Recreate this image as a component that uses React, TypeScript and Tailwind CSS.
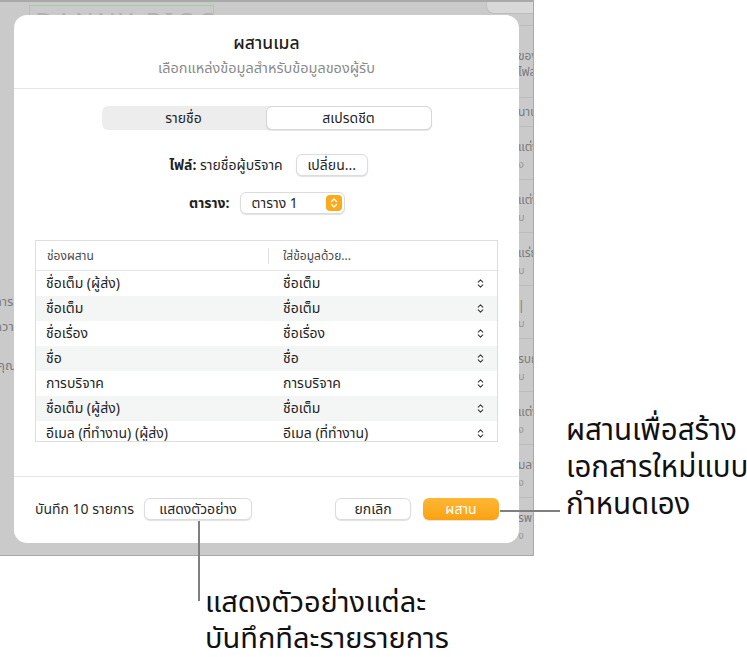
import { ChevronsUpDown } from "lucide-react";

const font = { fontFamily: '"Noto Sans Thai", "Noto Sans", "DejaVu Sans", sans-serif' };

const rows = [
  ["ชื่อเต็ม (ผู้ส่ง)", "ชื่อเต็ม"],
  ["ชื่อเต็ม", "ชื่อเต็ม"],
  ["ชื่อเรื่อง", "ชื่อเรื่อง"],
  ["ชื่อ", "ชื่อ"],
  ["การบริจาค", "การบริจาค"],
  ["ชื่อเต็ม (ผู้ส่ง)", "ชื่อเต็ม"],
  ["อีเมล (ที่ทำงาน) (ผู้ส่ง)", "อีเมล (ที่ทำงาน)"],
];

const sideRows = [
  ["แต่งงาน", "ง"],
  ["แต่งงาน", "บ"],
  ["แร่ธาตุ", "บ"],
  ["| ", "บ"],
  ["รบกวน", "บ"],
  ["แต่งงาน", "ง"],
  ["มลพิษ", "ง"],
  ["รพ", "ง"],
];

function Background() {
  return (
    <div className="relative w-[534px] h-[556px] bg-[#cacaca] border-t-2 border-r border-b border-[#a9a9a9] overflow-hidden">
      <div className="absolute left-[29px] top-[3px] w-[185px] h-[30px] border border-[#a6cda6] overflow-hidden">
        <div className="whitespace-nowrap text-[25px] leading-none tracking-[3px] text-[#b2b2b2] pl-[5px] pt-[5px]" style={font}>
          DANNY BIGG
        </div>
      </div>
      <div className="absolute left-[486px] top-0 w-[60px] h-[12px] rounded-bl-[8px] bg-[#d8d8d8] border-l border-b border-[#bdbdbd]" />
      <div className="absolute left-[495px] top-[23px] w-[60px] flex flex-col text-[#7b7b7b] text-[12px] leading-[16px] whitespace-nowrap" style={font}>
        <div className="h-[72px] border-t border-[#bcbcbc] pt-[22px] pl-[23px]">
          <div>ของ</div>
          <div>ไฟล์</div>
        </div>
        <div className="h-[29px] border-t border-[#bcbcbc] pl-[23px] pt-[6px]">นาน</div>
        {sideRows.map(([a, b], i) => (
          <div key={i} className="h-[53px] border-t border-[#bcbcbc] pl-[23px] pt-[12px]">
            <div>{a}</div>
            <div className="text-[11px] text-[#9a9a9a] mt-[2px]">{b}</div>
          </div>
        ))}
      </div>
      <div className="absolute left-[-6px] top-[292px] flex flex-col gap-[8px] text-[#7b7b7b] text-[13px] leading-[17px]" style={font}>
        <div>การ</div>
        <div>ความ</div>
        <div className="mt-[14px] pl-[3px]">คุณ</div>
      </div>
    </div>
  );
}

function Btn({ children, className = "" }: { children: React.ReactNode; className?: string }) {
  return (
    <div
      className={`h-[22px] flex items-center justify-center rounded-[6px] bg-white border border-[#dcdcdc] shadow-[0_1px_1px_rgba(0,0,0,0.12)] text-[14px] text-[#262626] ${className}`}
    >
      {children}
    </div>
  );
}

function Dialog() {
  return (
    <div
      className="absolute left-[14px] top-[15px] w-[505px] h-[528px] bg-white rounded-[13px] flex flex-col text-[#1f1f1f]"
      style={font}
    >
      <div className="flex flex-col items-center pt-[18px] h-[74px] border-b border-[#e6e6e6]">
        <div className="text-[17.5px] font-medium leading-[22px]">ผสานเมล</div>
        <div className="text-[14.5px] text-[#8b8b8b] leading-[20px] mt-[4px]">เลือกแหล่งข้อมูลสำหรับข้อมูลของผู้รับ</div>
      </div>

      <div className="flex justify-center mt-[17px]">
        <div className="w-[330px] h-[24px] flex rounded-[6px] bg-[#ededed]">
          <div className="flex-1 flex items-center justify-center text-[14px]">รายชื่อ</div>
          <div className="flex-1 flex items-center justify-center text-[14px] bg-white rounded-[6px] border border-[#d6d6d6] shadow-[0_1px_1px_rgba(0,0,0,0.1)]">
            สเปรดชีต
          </div>
        </div>
      </div>

      <div className="flex items-center justify-center gap-[13px] mt-[24px] pl-[4px]">
        <div className="text-[14px]">
          <span className="font-bold">ไฟล์:</span> รายชื่อผู้บริจาค
        </div>
        <Btn className="w-[72px]">เปลี่ยน...</Btn>
      </div>

      <div className="flex items-center gap-[10px] mt-[16px] pl-[175px]">
        <div className="text-[14px] font-bold">ตาราง:</div>
        <div className="w-[105px] h-[22px] flex items-center justify-between rounded-[6px] bg-white border border-[#dcdcdc] shadow-[0_1px_1px_rgba(0,0,0,0.12)] pl-[11px] pr-[2px] text-[14px]">
          <span>ตาราง 1</span>
          <div className="w-[16px] h-[16px] rounded-[4px] bg-[#f9ab1c] flex items-center justify-center">
            <ChevronsUpDown size={12} strokeWidth={2.6} className="text-white" />
          </div>
        </div>
      </div>

      <div className="mx-[21px] mt-[26px] h-[202px] border border-[#dedede] overflow-hidden">
        <div className="h-[30px] flex items-center border-b border-[#e3e3e3] text-[12px] text-[#4a4a4a]">
          <div className="w-[232px] pl-[11px]">ช่องผสาน</div>
          <div className="w-px h-[16px] bg-[#e0e0e0]" />
          <div className="pl-[14px]">ใส่ข้อมูลด้วย...</div>
        </div>
        {rows.map(([a, b], i) => (
          <div key={i} className={`h-[25px] flex items-center text-[14px] ${i % 2 === 1 ? "bg-[#f4f5f5]" : "bg-white"}`}>
            <div className="w-[233px] pl-[10px] truncate">{a}</div>
            <div className="flex-1 pl-[14px]">{b}</div>
            <ChevronsUpDown size={11} strokeWidth={2.2} className="mr-[11px] text-[#333]" />
          </div>
        ))}
      </div>

      <div className="mt-[34px] border-t border-[#e6e6e6] flex items-center px-[21px] pt-[21px]">
        <div className="text-[14px] text-[#2a2a2a]">บันทึก 10 รายการ</div>
        <Btn className="w-[108px] ml-[10px]">แสดงตัวอย่าง</Btn>
        <div className="flex-1" />
        <Btn className="w-[76px]">ยกเลิก</Btn>
        <div className="w-[76px] h-[22px] ml-[12px] mr-[-1px] flex items-center justify-center rounded-[6px] bg-gradient-to-b from-[#fdb733] to-[#f9a20f] text-white text-[14px] shadow-[0_1px_1px_rgba(0,0,0,0.12)]">
          ผสาน
        </div>
      </div>
    </div>
  );
}

export default function App() {
  return (
    <div className="relative w-[747px] h-[657px] bg-white overflow-hidden">
      <Background />
      <Dialog />
      <div className="absolute left-[500px] top-[510px] w-[60px] h-[2px] bg-[#7f7f7f]" />
      <div className="absolute left-[198px] top-[521px] w-[2px] h-[80px] bg-[#7f7f7f]" />
      <div className="absolute left-[566px] top-[413px] whitespace-nowrap text-[29.5px] leading-[37px] text-[#111]" style={font}>
        <div>ผสานเพื่อสร้าง</div>
        <div>เอกสารใหม่แบบ</div>
        <div>กำหนดเอง</div>
      </div>
      <div className="absolute left-[205px] top-[585px] whitespace-nowrap text-[29px] leading-[36px] text-[#111]" style={font}>
        <div>แสดงตัวอย่างแต่ละ</div>
        <div>บันทึกทีละรายรายการ</div>
      </div>
    </div>
  );
}
